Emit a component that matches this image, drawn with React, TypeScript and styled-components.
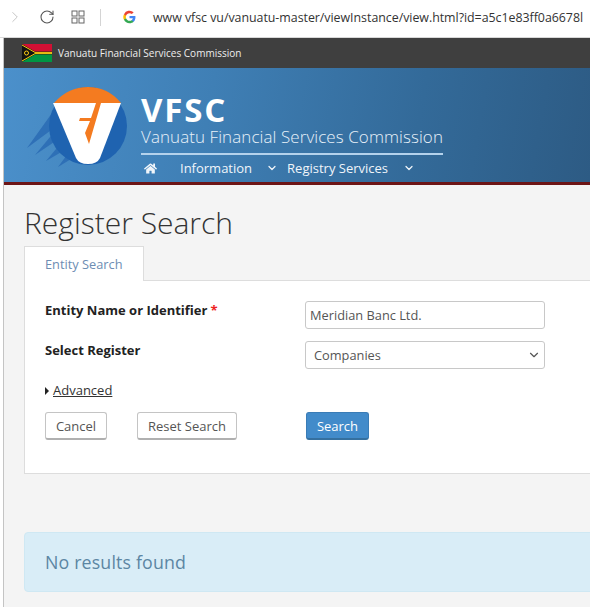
import React from "react";
import styled, { createGlobalStyle } from "styled-components";
import { ChevronRight, ChevronDown, RotateCw } from "lucide-react";
import { FaHome } from "react-icons/fa";

const Global = createGlobalStyle`
  html, body { margin: 0; padding: 0; width: 590px; height: 607px; overflow: hidden; background: #fff; }
  body { font-family: "Open Sans", "Noto Sans", sans-serif; color: #222; }
  * { box-sizing: border-box; }
`;

const BrowserBar = styled.div`
  height: 38px; display: flex; align-items: center; background: #fff; white-space: nowrap; overflow: hidden;
  border-bottom: 1px solid #d8d8d8; padding-bottom: 3px;
`;
const BackIcon = styled(ChevronRight)`margin-left: 6px; color: #c4c4c4; flex: none;`;
const ReloadIcon = styled(RotateCw)`margin-left: 15px; color: #555; flex: none;`;
const GridIcon = styled.svg`margin-left: 16px; flex: none;`;
const Separator = styled.div`width: 1px; height: 17px; background: #d4d4d4; margin-left: 15px; flex: none;`;
const GoogleIcon = styled.svg`margin-left: 22px; flex: none;`;
const Url = styled.div`margin-left: 17px; font-size: 12.4px; color: #333; letter-spacing: -0.03px;`;

const Page = styled.div`
  margin-left: 3px; border-left: 1px solid #c4c4c4; height: 569px; background: #f4f4f4; overflow: hidden;
`;
const TopBar = styled.div`
  height: 30px; background: #3f3f3f; display: flex; align-items: center; padding-left: 18px; gap: 6px;
  color: #eee; font-size: 10.03px;
`;
const Header = styled.header`
  height: 117px; display: flex;
  background: linear-gradient(100deg, #4b90cb 0%, #3f7fb5 35%, #336a99 70%, #2d5b84 100%);
  border-bottom: 3px solid #6d1516; color: #fff;
`;
const Brand = styled.div`margin-left: 11px; width: 302px; display: flex; flex-direction: column;`;
const BrandName = styled.div`
  font-size: 33px; font-weight: 700; line-height: 34px; margin-top: 25px; letter-spacing: 1.8px;
`;
const BrandSub = styled.div`
  font-size: 16.94px; font-weight: 300; line-height: 20px; letter-spacing: 0.1px; white-space: nowrap; color: #e8f1f9;
`;
const Nav = styled.nav`
  border-top: 2px solid #b4d2ec; margin-top: 6px; display: flex; align-items: center; height: 28px; font-size: 13px; color: #f0f5fa; white-space: nowrap;
`;
const HomeIcon = styled(FaHome)`margin: 0 23px 0 3px; flex: none;`;
const NavLabel = styled.span``;
const NavChevron = styled(ChevronDown)<{ $gap: number }>`margin: 0 0 0 ${p => p.$gap}px; flex: none;`;
const NavSecond = styled.span`margin-left: 9px;`;

const Main = styled.main`padding: 0 0 0 20px; width: 600px;`;
const Title = styled.h1`
  margin: 17px 0 0; font-weight: 300; font-size: 30px; line-height: 41px; color: #333;
`;
const Tab = styled.div`
  margin-top: 3px; width: 120px; height: 35px; background: #fff; border: 1px solid #ddd; border-bottom: none;
  display: flex; align-items: center; padding-left: 20px; font-size: 12.8px; color: #6d8db3; position: relative; z-index: 1;
  margin-bottom: -1px;
`;
const Panel = styled.section`
  height: 194px; background: #fff; border: 1px solid #ddd; padding: 20px 0 0 20px;
`;
const FormGrid = styled.div`
  display: grid; grid-template-columns: 260px 240px; row-gap: 12px; align-items: start;
`;
const Label = styled.label`font-size: 13px; font-weight: 700; line-height: 18px; color: #222; display: block;`;
const Req = styled.span`color: #e22; margin-left: 3px;`;
const Field = styled.div`
  height: 28px; border: 1px solid #c8c8c8; border-radius: 3px; background: #fff; font-size: 12.8px; color: #555;
  display: flex; align-items: center; padding-left: 4px;
`;
const SelectField = styled(Field)`justify-content: space-between; padding: 0 3px 0 8px;`;
const SelectChevron = styled(ChevronDown)`color: #555;`;
const Advanced = styled.div`
  display: flex; align-items: center; gap: 4px; margin-top: 13px; font-size: 13px; line-height: 17px; color: #333;
`;
const Caret = styled.span`
  width: 0; height: 0; border-left: 4px solid #222; border-top: 4px solid transparent; border-bottom: 4px solid transparent;
`;
const AdvLink = styled.a`text-decoration: underline; color: #333;`;
const Buttons = styled.div`display: flex; margin-top: 13px;`;
const Btn = styled.button<{ $w: number; $ml?: number }>`
  width: ${p => p.$w}px; margin-left: ${p => p.$ml ?? 0}px; height: 28px; background: #fff;
  border: 1px solid #c4c4c4; border-bottom: 2px solid #b0b0b0; border-radius: 3px; font-family: inherit; font-size: 13px; color: #555; padding: 0;
`;
const PrimaryBtn = styled(Btn)`background: #428bca; border-color: #3a7cb6; border-bottom-color: #35709f; color: #fff;`;
const Alert = styled.div`
  margin-top: 58px; height: 60px; background: #d9edf7; border: 1px solid #cfe8f3; border-radius: 4px 0 0 4px;
  display: flex; align-items: center; padding-left: 20px; font-size: 17.8px; color: #5c86a3; letter-spacing: 0.15px;
`;

const Flag = () => (
  <svg width="30" height="18" viewBox="0 0 30 18">
    <rect width="30" height="9" fill="#d21034" />
    <rect y="9" width="30" height="9" fill="#009543" />
    <path d="M0 0 L13 7.5 H30 V10.5 H13 L0 18Z" fill="#111" />
    <path d="M0 1 L13 8.4 H30 V9.6 H13 L0 17" fill="none" stroke="#fdce12" strokeWidth="1" />
    <circle cx="4.5" cy="9" r="2" fill="none" stroke="#fdce12" strokeWidth="1" />
  </svg>
);

const Logo = styled.svg`margin: 12px 0 0 16px; flex: none;`;

const VfscLogo = () => (
  <Logo width="110" height="90" viewBox="20 80 110 90">
    <path d="M52 113 L27 148 L58 125Z M60 125 L35 155 L63 136Z M66 137 L46 161 L70 147Z M72 148 L58 167 L76 156Z" fill="#2a6bb4" opacity="0.85" />
    <circle cx="88" cy="126" r="39" fill="#1f63b0" />
    <path d="M54 103 Q68 87 88 87 Q108 87 121 103Z" fill="#f47b20" />
    <path d="M53 103 H121 L100 158 Q97 164 88 164 Q79 164 76 158Z" fill="#fff" />
    <path d="M96 103 H101 L89 144 L85 133 L90 121 H79 L80 118 H91Z" fill="#f47b20" />
  </Logo>
);

export default function App() {
  return (
    <>
      <Global />
      <BrowserBar>
        <BackIcon size={18} strokeWidth={1.3} />
        <ReloadIcon size={16} strokeWidth={1.6} />
        <GridIcon width="14" height="14" viewBox="0 0 14 14" fill="none" stroke="#666" strokeWidth="1">
          <rect x="1" y="1" width="5" height="5" />
          <rect x="8" y="1" width="5" height="5" />
          <rect x="1" y="8" width="5" height="5" />
          <rect x="8" y="8" width="5" height="5" />
        </GridIcon>
        <Separator />
        <GoogleIcon width="13" height="14" viewBox="0 0 24 24">
          <path d="M23 12.3c0-.8-.1-1.6-.2-2.3H12v4.4h6.2a5.3 5.3 0 0 1-2.3 3.5v2.9h3.7c2.2-2 3.4-5 3.4-8.5z" fill="#4285f4" />
          <path d="M12 23.5c3.1 0 5.7-1 7.6-2.8l-3.7-2.9c-1 .7-2.3 1.1-3.9 1.1-3 0-5.5-2-6.4-4.8H1.8v3A11.5 11.5 0 0 0 12 23.5z" fill="#34a853" />
          <path d="M5.6 14.1a6.9 6.9 0 0 1 0-4.4v-3H1.8a11.5 11.5 0 0 0 0 10.4z" fill="#fbbc05" />
          <path d="M12 4.9c1.7 0 3.2.6 4.4 1.7l3.3-3.3A11.5 11.5 0 0 0 1.8 6.7l3.8 3C6.5 6.9 9 4.9 12 4.9z" fill="#ea4335" />
        </GoogleIcon>
        <Url>www vfsc vu/vanuatu-master/viewInstance/view.html?id=a5c1e83ff0a6678l</Url>
      </BrowserBar>
      <Page>
        <TopBar>
          <Flag />
          <span>Vanuatu Financial Services Commission</span>
        </TopBar>
        <Header>
          <VfscLogo />
          <Brand>
            <BrandName>VFSC</BrandName>
            <BrandSub>Vanuatu Financial Services Commission</BrandSub>
            <Nav>
              <HomeIcon size={13} />
              <NavLabel>Information</NavLabel>
              <NavChevron $gap={14} size={12} strokeWidth={2.5} />
              <NavSecond>Registry Services</NavSecond>
              <NavChevron $gap={15} size={12} strokeWidth={2.5} />
            </Nav>
          </Brand>
        </Header>
        <Main>
          <Title>Register Search</Title>
          <Tab>Entity Search</Tab>
          <Panel>
            <FormGrid>
              <Label>Entity Name or Identifier<Req>*</Req></Label>
              <Field>Meridian Banc Ltd.</Field>
              <Label>Select Register</Label>
              <SelectField>Companies<SelectChevron size={14} strokeWidth={2} /></SelectField>
            </FormGrid>
            <Advanced><Caret /><AdvLink>Advanced</AdvLink></Advanced>
            <Buttons>
              <Btn $w={62}>Cancel</Btn>
              <Btn $w={100} $ml={30}>Reset Search</Btn>
              <PrimaryBtn $w={63} $ml={69}>Search</PrimaryBtn>
            </Buttons>
          </Panel>
          <Alert>No results found</Alert>
        </Main>
      </Page>
    </>
  );
}
